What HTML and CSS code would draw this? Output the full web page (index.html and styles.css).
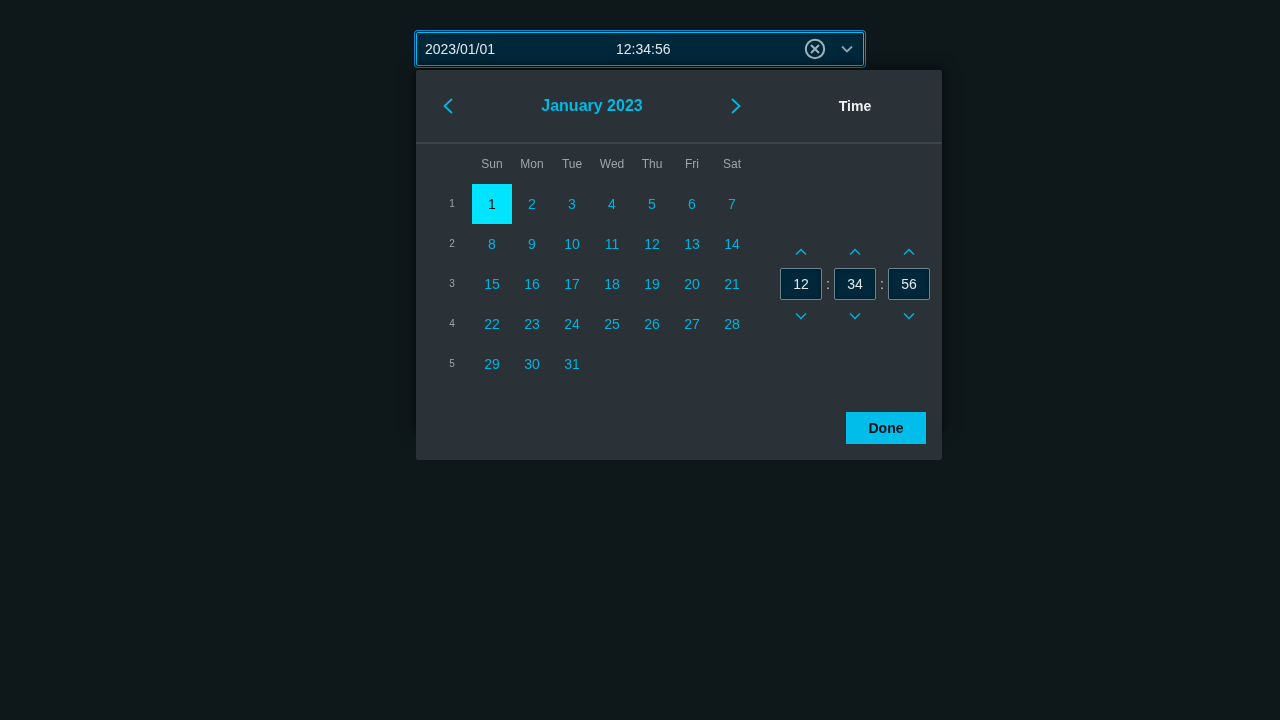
FILE: index.html
```html
<!DOCTYPE html>
<html lang="en">
<head>
<meta charset="utf-8">
<title>Date time picker</title>
<link rel="stylesheet" href="styles.css">
</head>
<body>
<div class="picker">
  <div class="field">
    <span class="field-date">2023/01/01</span>
    <span class="field-time">12:34:56</span>
    <svg class="clear" width="22" height="22" viewBox="0 0 22 22"><circle cx="11" cy="11" r="9.2"/><path d="M7 7l8 8M15 7l-8 8"/></svg>
    <svg class="caret" width="14" height="10" viewBox="0 0 14 10"><path d="M2 2.5l5 5 5-5"/></svg>
  </div>
  <div class="panel">
    <div class="panel-head">
      <div class="month-nav">
        <svg class="nav" width="12" height="18" viewBox="0 0 12 18"><path d="M10 2L2.5 9l7.5 7"/></svg>
        <span class="month">January 2023</span>
        <svg class="nav" width="12" height="18" viewBox="0 0 12 18"><path d="M3 2l7.5 7L3 16"/></svg>
      </div>
      <div class="time-title">Time</div>
    </div>
    <div class="panel-body">
      <div class="calendar">
        <span></span><span class="dow">Sun</span><span class="dow">Mon</span><span class="dow">Tue</span><span class="dow">Wed</span><span class="dow">Thu</span><span class="dow">Fri</span><span class="dow">Sat</span>
        <span class="wk">1</span><span class="day selected">1</span><span class="day">2</span><span class="day">3</span><span class="day">4</span><span class="day">5</span><span class="day">6</span><span class="day">7</span>
        <span class="wk">2</span><span class="day">8</span><span class="day">9</span><span class="day">10</span><span class="day">11</span><span class="day">12</span><span class="day">13</span><span class="day">14</span>
        <span class="wk">3</span><span class="day">15</span><span class="day">16</span><span class="day">17</span><span class="day">18</span><span class="day">19</span><span class="day">20</span><span class="day">21</span>
        <span class="wk">4</span><span class="day">22</span><span class="day">23</span><span class="day">24</span><span class="day">25</span><span class="day">26</span><span class="day">27</span><span class="day">28</span>
        <span class="wk">5</span><span class="day">29</span><span class="day">30</span><span class="day">31</span>
      </div>
      <div class="time">
        <div class="spin">
          <svg class="chev" width="12" height="8" viewBox="0 0 12 8"><path d="M1 6.5l5-5 5 5"/></svg>
          <div class="box">12</div>
          <svg class="chev" width="12" height="8" viewBox="0 0 12 8"><path d="M1 1.5l5 5 5-5"/></svg>
        </div>
        <span class="colon">:</span>
        <div class="spin">
          <svg class="chev" width="12" height="8" viewBox="0 0 12 8"><path d="M1 6.5l5-5 5 5"/></svg>
          <div class="box">34</div>
          <svg class="chev" width="12" height="8" viewBox="0 0 12 8"><path d="M1 1.5l5 5 5-5"/></svg>
        </div>
        <span class="colon">:</span>
        <div class="spin">
          <svg class="chev" width="12" height="8" viewBox="0 0 12 8"><path d="M1 6.5l5-5 5 5"/></svg>
          <div class="box">56</div>
          <svg class="chev" width="12" height="8" viewBox="0 0 12 8"><path d="M1 1.5l5 5 5-5"/></svg>
        </div>
      </div>
    </div>
    <div class="panel-foot"><button class="done">Done</button></div>
  </div>
</div>
</body>
</html>
```
FILE: styles.css
```css
* { box-sizing: border-box; }
html, body { margin: 0; height: 100%; }
body {
  background: #0e181b;
  font-family: "Liberation Sans", Arial, sans-serif;
  font-size: 14px;
  overflow: hidden;
}
.picker { padding: 32px 0 0 416px; width: 960px; will-change: transform; }
.field {
  width: 448px;
  height: 34px;
  display: flex;
  align-items: center;
  background: #00273a;
  border: 1px solid #00bfee;
  border-radius: 2px;
  box-shadow: 0 0 0 1px #0e181b, 0 0 0 2px #0a86d8, inset 0 0 4px rgba(0,0,0,.3);
  color: #dfe7ea;
  padding-left: 8px;
}
.field-date { width: 191px; }
.field-time { width: 188px; }
.clear { fill: none; stroke: #9db4be; stroke-width: 2; margin-right: 14px; flex: none; }
.caret { fill: none; stroke: #8ea4ae; stroke-width: 1.8; flex: none; }
.panel {
  position: relative;
  z-index: 0;
  width: 526px;
  height: 390px;
  margin-top: 4px;
  background: #2a3238;
  border-radius: 3px;
  display: flex;
  flex-direction: column;
}
.panel::before {
  content: "";
  position: absolute;
  z-index: -1;
  top: 0;
  left: 0;
  right: 0;
  bottom: 30px;
  box-shadow: 0 0 12px 2px rgba(0,0,0,.6);
}
.panel::after {
  content: "";
  position: absolute;
  z-index: -1;
  inset: 0;
  background: #2a3238;
  border-radius: 3px;
}
.panel-head {
  flex: none;
  height: 74px;
  display: flex;
  align-items: center;
  border-bottom: 2px solid #3c4649;
}
.month-nav {
  width: 354px;
  padding: 0 29px 0 26px;
  display: flex;
  align-items: center;
  justify-content: space-between;
}
.nav { fill: none; stroke: #00b9e4; stroke-width: 1.8; flex: none; }
.month { color: #00b9e4; font-size: 16px; font-weight: 700; padding-left: 1px; }
.time-title { width: 170px; text-align: center; color: #eef2f3; font-weight: 700; }
.panel-body { display: flex; flex: 1; min-height: 0; }
.calendar {
  margin-left: 16px;
  width: 320px;
  display: grid;
  grid-template-columns: repeat(8, 40px);
  grid-auto-rows: 40px;
  align-content: start;
  text-align: center;
}
.calendar span { display: block; line-height: 40px; }
.dow { color: #9aa6ab; font-size: 12px; }
.wk { color: #9aa6ab; font-size: 10px; }
.day { color: #00b2dc; }
.day.selected { background: #00e5ff; color: #0a1215; }
.time { display: flex; margin-left: 28px; align-items: flex-start; padding-top: 104px; }
.spin { display: flex; flex-direction: column; align-items: center; width: 42px; gap: 12px; }
.chev { fill: none; stroke: #00b2dc; stroke-width: 1.5; flex: none; }
.box {
  width: 42px;
  height: 32px;
  display: flex;
  align-items: center;
  justify-content: center;
  background: #00273a;
  border: 1px solid #6b8592;
  border-radius: 2px;
  box-shadow: inset 0 0 4px rgba(0,0,0,.35);
  color: #dfe7ea;
}
.colon { width: 12px; margin-top: 20px; line-height: 32px; text-align: center; color: #c5cdd0; }
.panel-foot { flex: none; display: flex; justify-content: flex-end; padding: 0 16px 16px; }
.done {
  width: 80px;
  height: 32px;
  border: 0;
  padding: 0;
  background: #00bde9;
  color: #001018;
  font: 700 14px "Liberation Sans", Arial, sans-serif;
}
```
